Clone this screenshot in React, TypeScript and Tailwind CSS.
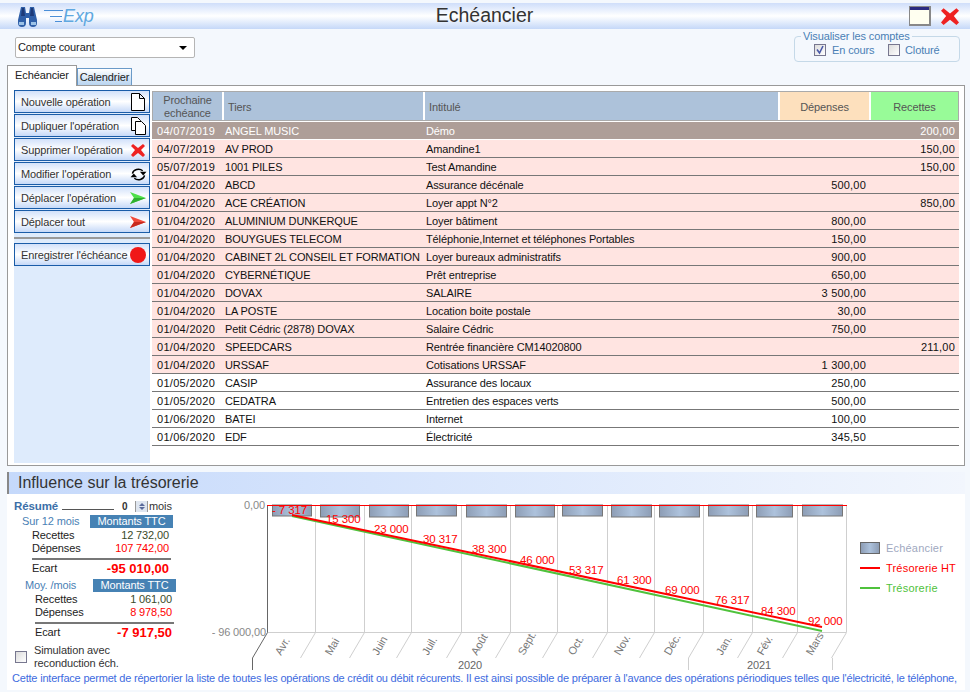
import type { ReactNode } from 'react';

type Row = { date: string; tiers: string; label: string; out?: string; inc?: string };

const rows: Row[] = [
  { date: '04/07/2019', tiers: 'ANGEL MUSIC', label: 'Démo', inc: '200,00' },
  { date: '04/07/2019', tiers: 'AV PROD', label: 'Amandine1', inc: '150,00' },
  { date: '05/07/2019', tiers: '1001 PILES', label: 'Test Amandine', inc: '150,00' },
  { date: '01/04/2020', tiers: 'ABCD', label: 'Assurance décénale', out: '500,00' },
  { date: '01/04/2020', tiers: 'ACE CRÉATION', label: 'Loyer appt N°2', inc: '850,00' },
  { date: '01/04/2020', tiers: 'ALUMINIUM DUNKERQUE', label: 'Loyer bâtiment', out: '800,00' },
  { date: '01/04/2020', tiers: 'BOUYGUES TELECOM', label: 'Téléphonie,Internet et téléphones Portables', out: '150,00' },
  { date: '01/04/2020', tiers: 'CABINET 2L CONSEIL ET FORMATION', label: 'Loyer bureaux administratifs', out: '900,00' },
  { date: '01/04/2020', tiers: 'CYBERNÉTIQUE', label: 'Prêt entreprise', out: '650,00' },
  { date: '01/04/2020', tiers: 'DOVAX', label: 'SALAIRE', out: '3 500,00' },
  { date: '01/04/2020', tiers: 'LA POSTE', label: 'Location boite postale', out: '30,00' },
  { date: '01/04/2020', tiers: 'Petit Cédric (2878) DOVAX', label: 'Salaire Cédric', out: '750,00' },
  { date: '01/04/2020', tiers: 'SPEEDCARS', label: 'Rentrée financière CM14020800', inc: '211,00' },
  { date: '01/04/2020', tiers: 'URSSAF', label: 'Cotisations URSSAF', out: '1 300,00' },
  { date: '01/05/2020', tiers: 'CASIP', label: 'Assurance des locaux', out: '250,00' },
  { date: '01/05/2020', tiers: 'CEDATRA', label: 'Entretien des espaces verts', out: '500,00' },
  { date: '01/06/2020', tiers: 'BATEI', label: 'Internet', out: '100,00' },
  { date: '01/06/2020', tiers: 'EDF', label: 'Électricité', out: '345,50' },
];

const PageIcon = () => (
  <svg width="14" height="18" viewBox="0 0 14 18" fill="none" stroke="#000">
    <path d="M.5.5h8l5 5v12H.5zM8.5.5v5h5" fill="#fff" />
  </svg>
);

const CopyIcon = () => (
  <svg width="15" height="18" viewBox="0 0 15 18" fill="none" stroke="#000">
    <path d="M.5.5h6l3 3v10H.5z" fill="#fff" />
    <path d="M4.5 4.5h6l4 4v9h-10z" fill="#fff" />
  </svg>
);

const CrossIcon = ({ size = 14 }: { size?: number }) => (
  <svg width={size} height={size} viewBox="0 0 14 14">
    <path d="M2 1l5 4 5-4 2 2-4 4 4 5-2 2-5-4-5 4-2-2 4-5-4-4z" fill="#ee2222" />
  </svg>
);

const RefreshIcon = () => (
  <svg width="17" height="15" viewBox="0 0 18 16" fill="none" stroke="#000" strokeWidth="1.5">
    <path d="M2.500 7A6.500 5.500 0 0 1 13.500 4" />
    <path d="M15.500 9A6.500 5.500 0 0 1 4.500 12" />
    <path d="M10.500 5h7L14 9z" fill="#000" stroke="none" />
    <path d="M.5 11h7L4 7z" fill="#000" stroke="none" />
  </svg>
);

const ArrowIcon = ({ color, dark }: { color: string; dark: string }) => (
  <svg width="16" height="12" viewBox="0 0 16 12">
    <path d="M0 0l16 6-16 6 4-6z" fill={color} />
    <path d="M0 12l16-6H4z" fill={dark} />
  </svg>
);

const ActionButton = ({ label, icon }: { label: string; icon: ReactNode }) => (
  <button className="flex h-[23px] w-[136px] items-center justify-between border border-[#1a5ca8] bg-gradient-to-b from-[#d2e1fa] via-[#ffffff] to-[#c6d9f8] pl-[6px] pr-[2px] pt-[1px] text-[11px] text-[#333]">
    <span className="whitespace-nowrap">{label}</span>
    <span className="flex w-[18px] justify-center">{icon}</span>
  </button>
);

const Checkbox = ({ checked }: { checked?: boolean }) => (
  <span className="flex h-[12px] w-[12px] shrink-0 items-center justify-center border border-[#77778f] bg-gradient-to-br from-[#dcdcdc] to-[#ffffff]">
    {checked && (
      <svg width="10" height="10" viewBox="0 0 10 10" fill="none" stroke="#4a5aa8" strokeWidth="1.6">
        <path d="M2 4.500l2.500 3.500 3.500-7" />
      </svg>
    )}
  </span>
);

const Binoculars = () => (
  <svg width="23" height="21" viewBox="0 0 23 21">
    <path d="M5 1h4l1 6h3l1-6h4l3 13v3a3.500 3.500 0 0 1-8 0v-5h-3v5a3.500 3.500 0 0 1-8 0v-3z" fill="#2f5fa8" />
    <path d="M3 16h5v3H3zM15 16h5v3h-5z" fill="#9cc2e6" />
    <path d="M6 2h2l1 8H5zM15 2h2l1 8h-4z" fill="#1d3a78" />
  </svg>
);

const Summary = ({ title, rec, dep, gap, className }: { title: string; rec: string; dep: string; gap: string; className: string }) => (
  <div className={className}>
    <div className="flex h-[13px] items-center justify-between">
      <span className="text-[#4a7fb5]">{title}</span>
      <span className="flex h-[13px] w-[83px] items-center justify-center bg-[#4682b4] text-white">Montants TTC</span>
    </div>
    <div className="ml-[10px] mt-[1px] flex h-[13px] items-center justify-between pr-[4px] leading-none">
      <span className="text-[#222]">Recettes</span>
      <span className="text-[#3a4a2a]">{rec}</span>
    </div>
    <div className="ml-[10px] flex h-[13px] items-center justify-between pr-[4px] leading-none">
      <span className="text-[#222]">Dépenses</span>
      <span className="text-[#ff0000]">{dep}</span>
    </div>
    <div className="ml-[10px] mr-[2px] mt-[3px] h-[2px] bg-[#777]" />
    <div className="ml-[10px] mt-[1px] flex h-[15px] items-center justify-between pr-[4px] leading-none">
      <span className="text-[#222]">Ecart</span>
      <span className="text-[13px] font-bold tracking-normal text-[#ff0000]">{gap}</span>
    </div>
  </div>
);

const gridX = [267, 315, 364, 411, 461, 510, 557, 607, 654, 703, 752, 797, 846];
const bars = [
  [272, 311, 516],
  [320, 359, 517],
  [369, 408, 517],
  [416, 456, 516],
  [466, 506, 517],
  [515, 554, 517],
  [562, 602, 516],
  [611, 651, 517],
  [659, 699, 517],
  [708, 748, 516],
  [756, 792, 517],
  [802, 842, 516],
];
const values: [string, number, number][] = [
  ['- 7 317', 272, 514],
  ['15 300', 326, 523],
  ['23 000', 374, 533],
  ['30 317', 423, 543],
  ['38 300', 472, 553],
  ['46 000', 520, 564],
  ['53 317', 569, 574],
  ['61 300', 617, 584],
  ['69 000', 665, 594],
  ['76 317', 715, 604],
  ['84 300', 761, 615],
  ['92 000', 808, 625],
];
const months: [string, number][] = [
  ['Avr.', 281],
  ['Mai', 331],
  ['Juin', 378],
  ['Juil.', 428],
  ['Août', 477],
  ['Sept.', 524],
  ['Oct.', 574],
  ['Nov.', 620],
  ['Déc.', 670],
  ['Jan.', 722],
  ['Fév.', 763],
  ['Mars', 812],
];

// chart coordinates are page pixels, shifted by the svg's viewBox
const Chart = () => (
  <svg className="shrink-0" width="643" height="176" viewBox="212 494 643 176">
    <defs>
      <linearGradient id="bar">
        <stop offset="0" stopColor="#8d9db5" />
        <stop offset="0.5" stopColor="#adc2dc" />
        <stop offset="1" stopColor="#8d9db5" />
      </linearGradient>
    </defs>
    {gridX.slice(1).map((x) => (
      <path key={x} d={`M${x + 0.5} 505V632.5L${x - 14.5} 658`} fill="none" stroke="#cfcfcf" />
    ))}
    <path d="M267.500 632.500H846" fill="none" stroke="#cfcfcf" />
    <path d="M267.500 505V632.500L252.500 658V670" fill="none" stroke="#666" />
    <path d="M688.500 658V670M832.500 658V670" fill="none" stroke="#cfcfcf" />
    {bars.map(([a, b, c]) => (
      <rect key={a} x={a + 0.5} y="505" width={b - a} height={c - 505} fill="url(#bar)" stroke="#777" />
    ))}
    <path d="M267 505.500H847" stroke="#ff0000" />
    <path d="M292 516L822 631" stroke="#4fc23c" strokeWidth="2" />
    <path d="M292 515L822 627" stroke="#ff0000" strokeWidth="2" />
    {values.map(([t, x, y]) => (
      <text key={t} x={x} y={y} fontSize="11.5" fill="#ff0000">
        {t}
      </text>
    ))}
    <text x="265" y="509" textAnchor="end" fontSize="11" fill="#888">0,00</text>
    <text x="266" y="636" textAnchor="end" fontSize="11" fill="#888">- 96 000,00</text>
    {months.map(([m, x]) => (
      <text key={m} x={x} y="656" fontSize="11" fill="#777" transform={`rotate(-60 ${x} 656)`}>
        {m}
      </text>
    ))}
    <text x="458" y="669" fontSize="11" fill="#666">2020</text>
    <text x="747" y="669" fontSize="11" fill="#666">2021</text>
  </svg>
);

export default function App() {
  return (
    <div className="h-[692px] w-[970px] overflow-hidden bg-[#f4f8fd] pt-[3px] text-[11px] tracking-[-0.12px] [font-family:'Liberation_Sans',sans-serif]">
      <header className="flex h-[26px] items-center justify-between bg-gradient-to-b from-[#cfdefa] via-[#ffffff] to-[#c5d8f8] pl-[16px] pr-[11px]">
        <div className="flex w-[200px] items-center">
          <Binoculars />
          <svg className="ml-[5px]" width="19" height="14" viewBox="0 0 19 14" fill="none" stroke="#4a8fd8">
            <path d="M0 1.500h19M6 7.500h12M11 12.500h7" />
          </svg>
          <span className="text-[18px] italic text-[#5fa8e0]">Exp</span>
        </div>
        <h1 className="-ml-[6px] text-[19.5px] tracking-normal text-[#333]">Echéancier</h1>
        <div className="flex w-[200px] items-center justify-end gap-[10px]">
          <span className="block h-[20px] w-[22px] border border-[#888] border-b-2 border-r-2 bg-[#fffff0]">
            <span className="block h-[3px] bg-[#2a2a80]" />
          </span>
          <CrossIcon size={18} />
        </div>
      </header>

      <div className="flex h-[37px] justify-between pl-[15px] pr-[10px]">
        <div className="mt-[8px] flex h-[21px] w-[180px] items-center justify-between rounded-[2px] border border-[#b5b5b5] bg-white pl-[2px] pr-[7px] text-[#222]">
          <span>Compte courant</span>
          <span className="h-0 w-0 border-x-[4px] border-t-[4px] border-x-transparent border-t-black" />
        </div>
        <fieldset className="mt-[1px] h-[32px] w-[166px] rounded-[4px] border border-[#c5d9e8] pl-[6px] leading-[12px] text-[#4a7fb5]">
          <legend className="px-[2px]">Visualiser les comptes</legend>
          <div className="flex items-center pl-[13px] pt-[2px]">
            <Checkbox checked />
            <span className="ml-[6px] w-[56px]">En cours</span>
            <Checkbox />
            <span className="ml-[5px]">Cloturé</span>
          </div>
        </fieldset>
      </div>

      <div className="flex h-[19px] items-end pl-[7px] text-[#222]">
        <span className="z-10 -mb-px flex h-[21px] w-[70px] items-center justify-center border border-b-0 border-[#999] bg-white pb-[2px]">Echéancier</span>
        <span className="flex h-[17px] w-[55px] items-center justify-center border border-b-0 border-[#6a9ac8] bg-gradient-to-b from-[#ffffff] to-[#b8d4f0] pt-[1px]">Calendrier</span>
      </div>

      <div className="ml-[7px] flex h-[381px] w-[958px] border border-[#999] bg-white pb-[2px] pl-[6px] pt-[4px]">
        <aside className="flex w-[136px] shrink-0 flex-col gap-[1px] bg-[#deebfc]">
          <ActionButton label="Nouvelle opération" icon={<PageIcon />} />
          <ActionButton label="Dupliquer l'opération" icon={<CopyIcon />} />
          <ActionButton label="Supprimer l'opération" icon={<CrossIcon />} />
          <ActionButton label="Modifier l'opération" icon={<RefreshIcon />} />
          <ActionButton label="Déplacer l'opération" icon={<ArrowIcon color="#4fe04a" dark="#2fb02f" />} />
          <ActionButton label="Déplacer tout" icon={<ArrowIcon color="#f04a3a" dark="#c82a1e" />} />
          <div className="my-[3px] h-[2px] bg-[#999]" />
          <ActionButton label="Enregistrer l'échéance" icon={<span className="block h-[16px] w-[16px] rounded-full bg-[#f01818]" />} />
        </aside>

        <div className="ml-[2px] w-[807px]">
          <div className="mt-[1px] grid h-[30px] grid-cols-[69px_201px_355px_91px_89px] border border-[#aaa] text-[#555]">
            <div className="flex items-center justify-center bg-[#adc2da] pt-[1px] text-center leading-[13px]">Prochaine<br />echéance</div>
            <div className="flex items-center border-l-2 border-white bg-[#adc2da] pl-[4px] pt-[2px]">Tiers</div>
            <div className="flex items-center border-l-2 border-white bg-[#adc2da] pl-[4px] pt-[2px]">Intitulé</div>
            <div className="flex items-center justify-center border-l-2 border-white bg-[#fde0bd] pt-[2px]">Dépenses</div>
            <div className="flex items-center justify-center border-l-2 border-white bg-[#98fb98] pt-[2px]">Recettes</div>
          </div>
          <div className="mt-[1px]">
            {rows.map((r, i) => (
              <div
                key={r.tiers}
                className={`grid h-[18px] grid-cols-[72px_200px_354px_91px_90px] items-center pt-[1px] ${
                  i === 0 ? 'border-b border-white bg-[#ae9e98] text-white' : i < 14 ? 'border-b border-[#777] bg-[#ffe4e1] text-[#111]' : 'border-b border-[#777] bg-white text-[#111]'
                }`}
              >
                <span className="pl-[5px] tracking-[0.3px]">{r.date}</span>
                <span className="whitespace-nowrap pl-[1px]">{r.tiers}</span>
                <span className="pl-[2px]">{r.label}</span>
                <span className="pr-[3px] text-right tracking-[0.2px]">{r.out}</span>
                <span className="pr-[4px] text-right tracking-[0.2px]">{r.inc}</span>
              </div>
            ))}
          </div>
        </div>
      </div>

      <div className="ml-[7px] mt-[6px] flex h-[22px] w-[958px] items-center border-l-2 border-[#888] bg-gradient-to-r from-[#c5d9fb] to-[#f2f6fd] pl-[9px] text-[16px] tracking-normal text-[#333]">
        Influence sur la trésorerie
      </div>

      <div className="ml-[7px] h-[196px] w-[958px] bg-white">
        <div className="flex h-[176px]">
          <div className="w-[205px] shrink-0 pl-[7px] pt-[6px]">
            <div className="flex h-[13px] w-[164px] items-center">
              <span className="text-[11.5px] font-bold text-[#3c6fa8]">Résumé</span>
              <span className="ml-[4px] mt-[6px] h-[1px] w-[52px] bg-[#555]" />
              <span className="ml-[8px] w-[13px] text-[10px] font-bold text-[#333]">0</span>
              <span className="flex h-[11px] w-[13px] flex-col items-center justify-center gap-[1px] border-x border-[#999] bg-[#dfe6f0]">
                <span className="h-0 w-0 border-x-[3px] border-b-[3px] border-x-transparent border-b-[#5a6a9a]" />
                <span className="h-0 w-0 border-x-[3px] border-t-[3px] border-x-transparent border-t-[#5a6a9a]" />
              </span>
              <span className="ml-[1px] text-[#333]">mois</span>
            </div>
            <Summary title="Sur 12 mois" rec="12 732,00" dep="107 742,00" gap="-95 010,00" className="ml-[8px] mt-[2px] w-[151px]" />
            <Summary title="Moy. /mois" rec="1 061,00" dep="8 978,50" gap="-7 917,50" className="ml-[11px] mt-[3px] w-[151px]" />
            <div className="mt-[4px] flex items-center gap-[7px] pl-[1px] leading-[13px] text-[#333]">
              <Checkbox />
              <span>Simulation avec<br />reconduction éch.</span>
            </div>
          </div>
          <Chart />
          <ul className="ml-[5px] mt-[48px] flex flex-col gap-[8px] tracking-[0.2px]">
            <li className="flex h-[12px] items-center gap-[6px] text-[#a0a8c0]">
              <span className="h-[12px] w-[20px] border border-[#666] bg-gradient-to-r from-[#8d9db5] via-[#adc2dc] to-[#8d9db5]" />Echéancier
            </li>
            <li className="flex h-[12px] items-center gap-[6px] text-[#ff0000]">
              <span className="h-[2px] w-[20px] bg-[#ff0000]" />Trésorerie HT
            </li>
            <li className="flex h-[12px] items-center gap-[6px] text-[#4fc23c]">
              <span className="h-[2px] w-[20px] bg-[#4fc23c]" />Trésorerie
            </li>
          </ul>
        </div>
        <p className="whitespace-nowrap pl-[5px] tracking-[-0.2px] text-[#3e6be0]">
          Cette interface permet de répertorier la liste de toutes les opérations de crédit ou débit récurents. Il est ainsi possible de préparer à l'avance des opérations périodiques telles que l'électricité, le téléphone,
        </p>
      </div>
    </div>
  );
}
